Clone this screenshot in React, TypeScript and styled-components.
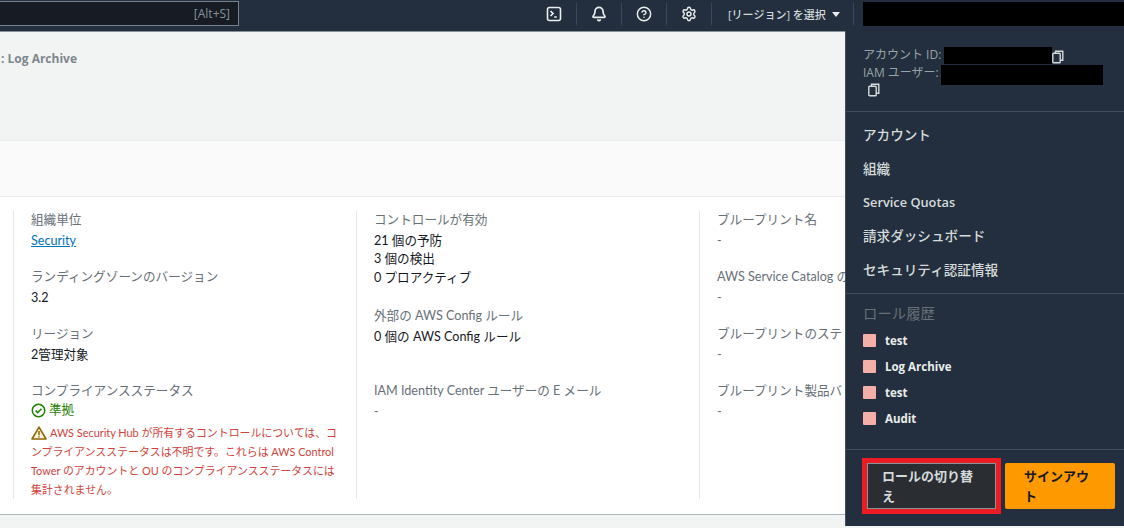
import React from 'react'
import styled, { createGlobalStyle } from 'styled-components'
import { Bell, CircleHelp, Settings } from 'lucide-react'

const FONT = `"Open Sans", "Noto Sans CJK JP", sans-serif`
const BODY_FONT = `Lato, "Noto Sans CJK JP", sans-serif`

const Global = createGlobalStyle`
    html, body {
        margin: 0;
        padding: 0;
        background: #ffffff;
        overflow: hidden;
    }
    * {
        box-sizing: border-box;
    }
`

const Page = styled.div`
    position: relative;
    width: 1124px;
    height: 528px;
    overflow: hidden;
    font-family: ${FONT};
    display: flex;
    flex-direction: column;
`

const TopBar = styled.header`
    height: 32px;
    flex: none;
    background: #232f3e;
    border-bottom: 1px solid #8a9299;
    display: flex;
    align-items: flex-start;
    justify-content: space-between;
`

const Search = styled.div`
    width: 239px;
    height: 25px;
    margin-top: 1px;
    background: #161b24;
    border: 1px solid #76838c;
    border-left: none;
    color: #879596;
    font-size: 12px;
    line-height: 23px;
    text-align: right;
    padding-right: 8px;
`

const TopRight = styled.div`
    display: flex;
    align-items: flex-start;
`

const IconCell = styled.div`
    width: 45px;
    height: 22px;
    margin-top: 3px;
    display: flex;
    align-items: center;
    justify-content: center;
    border-right: 1px solid #3b4756;
    color: #eaeded;
`

const RegionCell = styled.div`
    width: 142px;
    height: 22px;
    margin-top: 3px;
    padding-left: 16px;
    display: flex;
    align-items: center;
    gap: 6px;
    border-right: 1px solid #3b4756;
    color: #d5dbdb;
    font-size: 11px;
    font-weight: 500;
`

const Caret = styled.span`
    width: 0;
    height: 0;
    border-left: 4px solid transparent;
    border-right: 4px solid transparent;
    border-top: 5px solid #eaeded;
`

const AccountMask = styled.div`
    width: 261px;
    height: 24px;
    margin: 2px 0 0 9px;
    background: #000000;
`

const Banner = styled.div`
    height: 109px;
    flex: none;
    background: #f2f3f3;
    border-bottom: 1px solid #eaeded;
    padding: 18px 0 0 1px;
    color: #7d878f;
    font-size: 12px;
    font-weight: 700;
    line-height: 17px;
`

const CardHeader = styled.div`
    height: 56px;
    flex: none;
    background: #fafafa;
    border-bottom: 1px solid #e9ebed;
`

const CardBody = styled.main`
    height: 317px;
    flex: none;
    padding: 14px 0 0 13px;
    display: grid;
    grid-template-columns: 343px 343px 146px;
    background: #ffffff;
    font-family: ${BODY_FONT};
`

const Column = styled.section`
    height: 288px;
    padding-left: 17px;
    border-left: 1px solid #e4e7e9;
    display: flex;
    flex-direction: column;
    overflow: hidden;
`

const Field = styled.div<{ $height: number }>`
    height: ${p => p.$height}px;
    flex: none;
`

const Label = styled.div`
    color: #687078;
    font-size: 12.6px;
    line-height: 18px;
    white-space: nowrap;
`

const Value = styled.div`
    color: #16191f;
    font-size: 12.6px;
    line-height: 18.5px;
    margin-top: 2.5px;
    white-space: nowrap;

    & + & {
        margin-top: 0;
    }
`

const Dash = styled(Value)`
    color: #687078;
`

const Link = styled.a`
    color: #0073bb;
    font-size: 12.6px;
    line-height: 18px;
    display: block;
    margin-top: 3px;
    text-decoration: underline;
`

const Status = styled.div`
    display: flex;
    align-items: center;
    gap: 3px;
    color: #1d8102;
    font-size: 12.6px;
    line-height: 18px;
    margin-top: 1px;
`

const Warning = styled.p`
    width: 306px;
    margin: 4px 0 0;
    color: #d1423a;
    font-size: 10.9px;
    line-height: 19px;

    svg {
        vertical-align: -3px;
        margin-right: 3px;
    }
`

const Footer = styled.div`
    flex: 1;
    background: #f2f3f3;
    border-top: 1px solid #aab7b8;
`

const Menu = styled.aside`
    position: absolute;
    top: 31px;
    right: 0;
    bottom: 2px;
    width: 279px;
    background: #232f3e;
    border-left: 1px solid #414d5c;
`

const AccountInfo = styled.div`
    height: 81px;
    padding: 15px 17px 0;
    border-bottom: 1px solid #414d5c;
    color: #95a5a6;
    font-size: 12px;
    line-height: 16px;
`

const InfoRow = styled.div`
    display: flex;
    align-items: center;
    height: 18px;
    white-space: nowrap;
`

const Mask = styled.span<{ $width: number; $height: number; $left: number; $drop?: number }>`
    display: block;
    width: ${p => p.$width}px;
    height: ${p => p.$height}px;
    margin: ${p => p.$drop ?? 0}px 0 0 ${p => p.$left}px;
    background: #000000;
    flex: none;
`

const CopyWrap = styled.span<{ $left: number; $top: number }>`
    display: block;
    margin: ${p => p.$top}px 0 0 ${p => p.$left}px;
    height: 14px;
    color: #d5dbdb;
`

const NavList = styled.nav`
    height: 182px;
    padding-top: 6px;
    border-bottom: 1px solid #414d5c;
`

const NavItem = styled.a<{ $latin?: boolean }>`
    display: flex;
    align-items: center;
    height: 33.7px;
    padding-left: 17px;
    color: #d5dbdb;
    font-size: ${p => (p.$latin ? 12.8 : 13.6)}px;
    font-weight: ${p => (p.$latin ? 600 : 500)};
    line-height: 18px;
`

const History = styled.div`
    height: 156px;
    padding: 11px 17px 0;
    border-bottom: 1px solid #414d5c;
`

const HistoryTitle = styled.div`
    color: #687078;
    font-size: 14.4px;
    line-height: 18px;
    margin-bottom: 5px;
`

const RoleRow = styled.div`
    display: flex;
    align-items: center;
    gap: 9px;
    height: 25.8px;
    color: #eaeded;
    font-size: 11.5px;
    font-weight: 700;
`

const Swatch = styled.span`
    width: 13px;
    height: 13px;
    flex: none;
    border-radius: 1px;
    background: #f4b0a8;
`

const Actions = styled.div`
    display: flex;
    align-items: flex-start;
    gap: 4px;
    padding: 8px 0 0 16px;
`

const Highlight = styled.div`
    padding: 5px;
    background: #ed1c24;
    display: flex;
`

const Button = styled.button<{ $primary?: boolean }>`
    height: 46px;
    width: ${p => (p.$primary ? 110 : 129)}px;
    padding: 0 ${p => (p.$primary ? 20 : 14)}px 0 ${p => (p.$primary ? 19 : 14)}px;
    margin-top: ${p => (p.$primary ? 5 : 0)}px;
    background: ${p => (p.$primary ? '#ff9900' : '#2a2e33')};
    border: ${p => (p.$primary ? 'none' : '1px solid #879596')};
    border-radius: ${p => (p.$primary ? 2 : 0)}px;
    color: ${p => (p.$primary ? '#16191f' : '#d5dbdb')};
    font-family: ${FONT};
    font-size: 13px;
    font-weight: 600;
    line-height: 20px;
    text-align: left;
`

const CopyIcon = () => (
    <svg width="12" height="14" viewBox="0 0 12 14" fill="none" stroke="currentColor" strokeWidth="1.4">
        <rect x="0.8" y="3.2" width="7.4" height="9.6" rx="0.8" />
        <path d="M3.5 3V1.2h7.3v9H8.4" />
    </svg>
)

const TerminalIcon = () => (
    <svg width="16" height="16" viewBox="0 0 16 16" fill="none" stroke="currentColor" strokeWidth="1.6">
        <rect x="1.5" y="1.5" width="13" height="13" rx="2" />
        <path d="M4.5 5l2.6 2.6-2.6 2.4M8.2 11h2.6" />
    </svg>
)

const CheckIcon = () => (
    <svg width="15" height="15" viewBox="0 0 15 15" fill="none" stroke="#1d8102" strokeWidth="1.5">
        <circle cx="7.5" cy="7.5" r="6.2" />
        <path d="M4.6 7.6l2.1 2.1 3.8-4" />
    </svg>
)

const WarningIcon = () => (
    <svg width="16" height="14" viewBox="0 0 16 14">
        <path d="M8 1.2L15 13H1z" fill="#fdf3dc" stroke="#8d6605" strokeWidth="1.6" strokeLinejoin="round" />
        <path d="M8 5v4.2M8 10.2v1.4" stroke="#8d6605" strokeWidth="1.5" />
    </svg>
)

const roles = ['test', 'Log Archive', 'test', 'Audit']
const navItems = ['アカウント', '組織', 'Service Quotas', '請求ダッシュボード', 'セキュリティ認証情報']

export default function App() {
    return (
        <Page>
            <Global />
            <TopBar>
                <Search>[Alt+S]</Search>
                <TopRight>
                    <IconCell><TerminalIcon /></IconCell>
                    <IconCell><Bell size={16} strokeWidth={2.6} /></IconCell>
                    <IconCell><CircleHelp size={16} strokeWidth={2.2} /></IconCell>
                    <IconCell><Settings size={16} strokeWidth={2.2} /></IconCell>
                    <RegionCell>[リージョン] を選択 <Caret /></RegionCell>
                    <AccountMask />
                </TopRight>
            </TopBar>
            <Banner>: Log Archive</Banner>
            <CardHeader />
            <CardBody>
                <Column>
                    <Field $height={57}>
                        <Label>組織単位</Label>
                        <Link>Security</Link>
                    </Field>
                    <Field $height={57}>
                        <Label>ランディングゾーンのバージョン</Label>
                        <Value>3.2</Value>
                    </Field>
                    <Field $height={57}>
                        <Label>リージョン</Label>
                        <Value>2管理対象</Value>
                    </Field>
                    <Field $height={117}>
                        <Label>コンプライアンスステータス</Label>
                        <Status><CheckIcon />準拠</Status>
                        <Warning>
                            <WarningIcon />
                            AWS Security Hub が所有するコントロールについては、コンプライアンスステータスは不明です。これらは AWS Control Tower のアカウントと OU のコンプライアンスステータスには集計されません。
                        </Warning>
                    </Field>
                </Column>
                <Column>
                    <Field $height={96}>
                        <Label>コントロールが有効</Label>
                        <Value>21 個の予防</Value>
                        <Value>3 個の検出</Value>
                        <Value>0 プロアクティブ</Value>
                    </Field>
                    <Field $height={75}>
                        <Label>外部の AWS Config ルール</Label>
                        <Value>0 個の AWS Config ルール</Value>
                    </Field>
                    <Field $height={57}>
                        <Label>IAM Identity Center ユーザーの E メール</Label>
                        <Dash>-</Dash>
                    </Field>
                </Column>
                <Column>
                    <Field $height={57}>
                        <Label>ブループリント名</Label>
                        <Dash>-</Dash>
                    </Field>
                    <Field $height={57}>
                        <Label>AWS Service Catalog の</Label>
                        <Dash>-</Dash>
                    </Field>
                    <Field $height={57}>
                        <Label>ブループリントのステ</Label>
                        <Dash>-</Dash>
                    </Field>
                    <Field $height={57}>
                        <Label>ブループリント製品バ</Label>
                        <Dash>-</Dash>
                    </Field>
                </Column>
            </CardBody>
            <Footer />
            <Menu>
                <AccountInfo>
                    <InfoRow>
                        アカウント ID:<Mask $width={108} $height={17} $left={3} />
                        <CopyWrap $left={0} $top={3}><CopyIcon /></CopyWrap>
                    </InfoRow>
                    <InfoRow>
                        IAM ユーザー:<Mask $width={162} $height={20} $left={2} $drop={4} />
                    </InfoRow>
                    <InfoRow>
                        <CopyWrap $left={5} $top={-3}><CopyIcon /></CopyWrap>
                    </InfoRow>
                </AccountInfo>
                <NavList>
                    {navItems.map(item => (
                        <NavItem key={item} $latin={item === 'Service Quotas'}>{item}</NavItem>
                    ))}
                </NavList>
                <History>
                    <HistoryTitle>ロール履歴</HistoryTitle>
                    {roles.map((role, i) => (
                        <RoleRow key={i}><Swatch />{role}</RoleRow>
                    ))}
                </History>
                <Actions>
                    <Highlight>
                        <Button>ロールの切り替え</Button>
                    </Highlight>
                    <Button $primary>サインアウト</Button>
                </Actions>
            </Menu>
        </Page>
    )
}
